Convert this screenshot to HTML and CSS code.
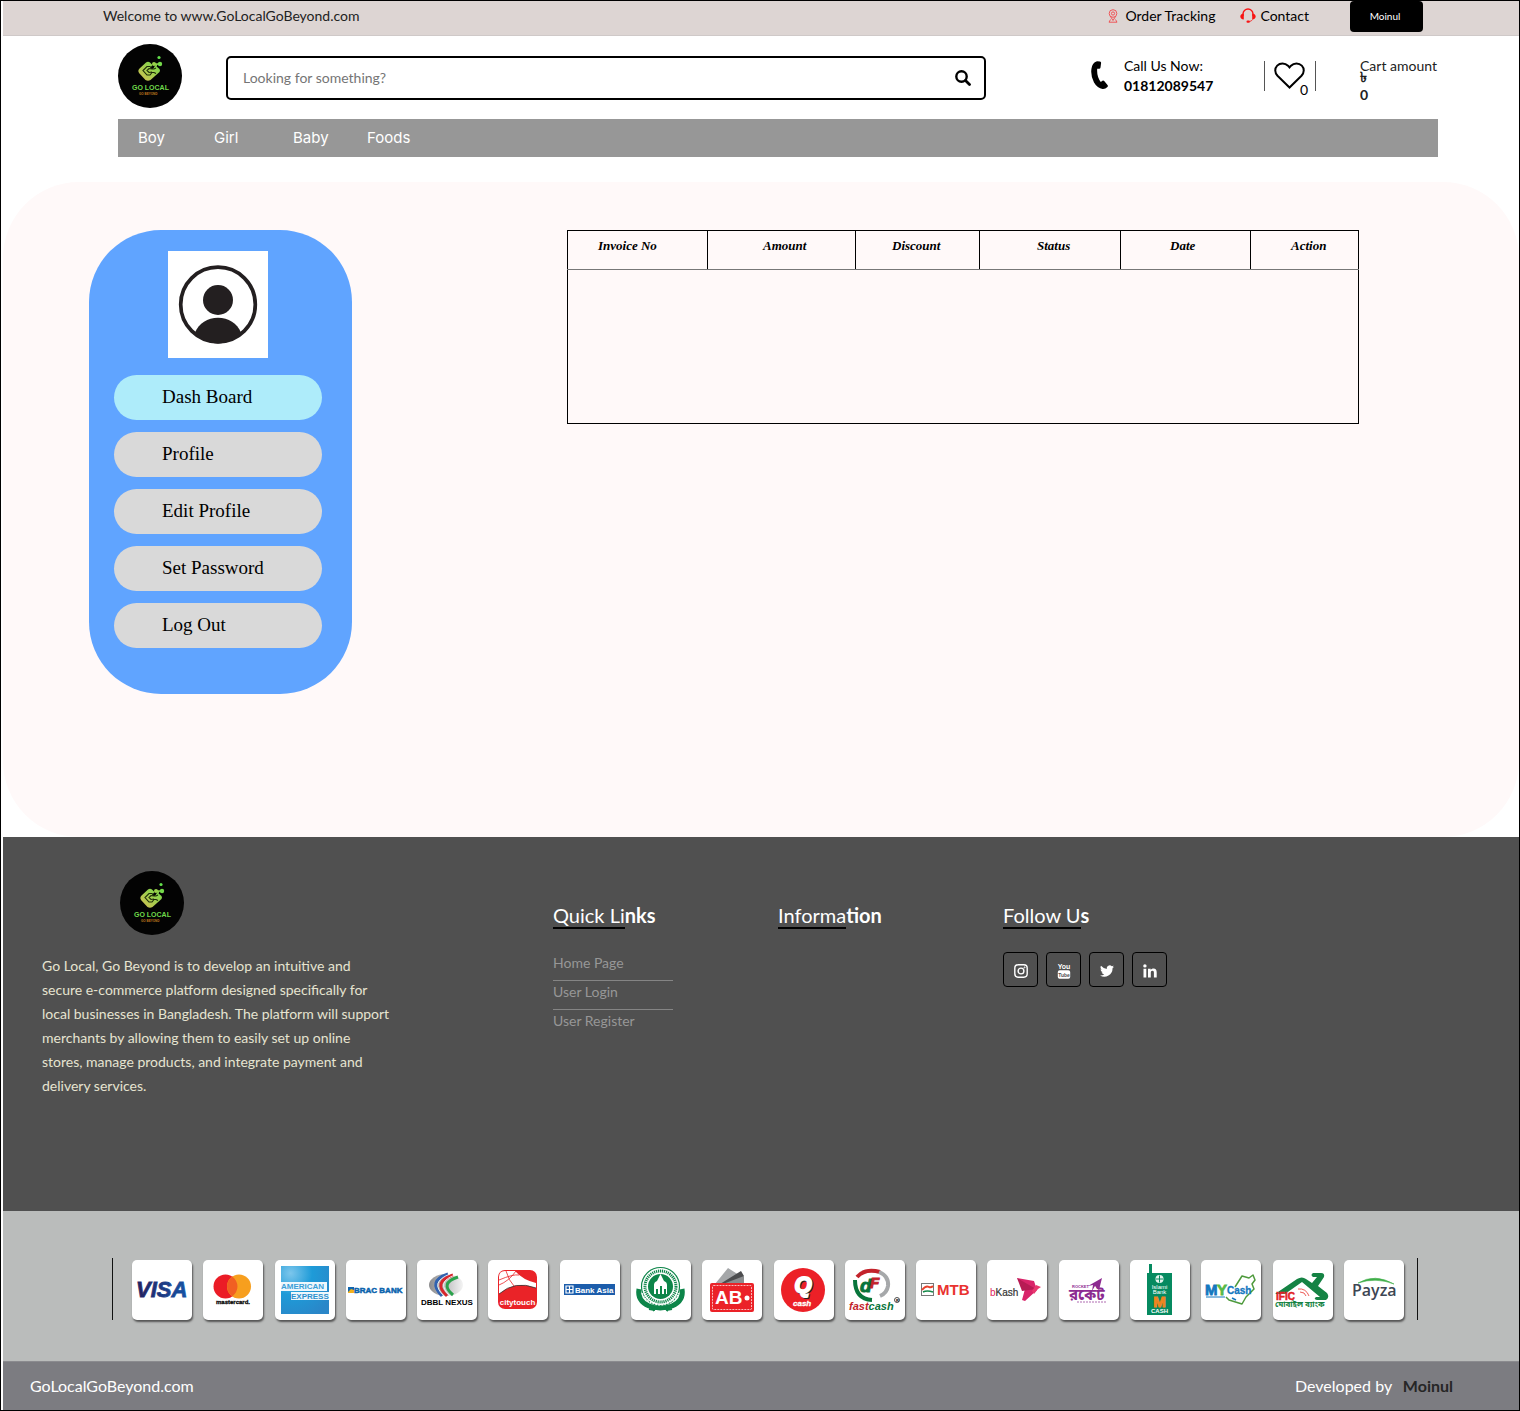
FILE: index.html
```html
<!DOCTYPE html>
<html lang="en">
<head>
<meta charset="utf-8">
<meta name="viewport" content="width=device-width, initial-scale=1">
<title>Go Local Go Beyond - Dash Board</title>
<link rel="stylesheet" href="styles.css">
</head>
<body>
<svg class="defs" width="0" height="0" aria-hidden="true">
  <defs>
    <linearGradient id="lime" x1="0" y1="1" x2="1" y2="0"><stop offset="0" stop-color="#d8bd52"/><stop offset="1" stop-color="#6fdc4a"/></linearGradient>
    <linearGradient id="visa" x1="0" x2="1"><stop offset="0" stop-color="#23205f"/><stop offset="1" stop-color="#1654a6"/></linearGradient>
    <radialGradient id="amex" cx=".2" cy=".15" r="1"><stop offset="0" stop-color="#7cc6ec"/><stop offset=".45" stop-color="#1e9bd8"/><stop offset="1" stop-color="#2a86c8"/></radialGradient>
    <linearGradient id="steel" x1="0" x2="1"><stop offset="0" stop-color="#8b8b8d"/><stop offset="1" stop-color="#f4f4f4"/></linearGradient>
    <symbol id="logo" viewBox="0 0 64 64">
      <circle cx="32" cy="32" r="32" fill="#030303"/>
      <path d="M28 18.500q2-1.500 4 0l2.500 2.500-2 2.500 2 1.500 2-1 1.500-2 3.500 3q1 1.500 0 3l-9 8q-2.500 1.500-5 0l-6.500-7q-1.500-2 0-4z" fill="url(#lime)"/>
      <path d="M36 20h6M36 25l3-5" stroke="#8bd44a" stroke-width="1.500"/>
      <circle cx="36" cy="20" r="2" fill="#9ad24a"/><circle cx="42" cy="20" r="2.200" fill="#74d94a"/><circle cx="41" cy="13.500" r="1.600" fill="#63e04c"/>
      <path d="M38 24l-2 1h-2l-2-2.500h-3l-4 4 4 4.500h3l2-2.500h2l2 1M34 25l-3-.5-2 2 2 2 3-.5" fill="none" stroke="#1c2a08" stroke-width="1.100"/>
      <text x="14" y="46" class="logo-name">GO LOCAL</text>
      <text x="21" y="51" class="logo-sub">GO BEYOND</text>
    </symbol>
  </defs>
</svg>

<div class="page">
  <div class="topbar">
    <p class="welcome">Welcome to www.GoLocalGoBeyond.com</p>
    <a class="top-link" href="#tracking">
      <svg width="10" height="14" viewBox="0 0 10 14" fill="none" stroke="#f0474b"><circle cx="5" cy="4.500" r="3.800" stroke-width=".9"/><circle cx="5" cy="4.500" r="1.600" stroke-width=".9"/><path d="M2.500 7.500 5 11.500 7.500 7.500M2.500 10.500 1 13.200h8l-1.500-2.700" stroke-width=".9"/></svg>
      Order Tracking
    </a>
    <a class="top-link contact" href="#contact">
      <svg width="16" height="17" viewBox="0 0 16 17"><path d="M3 8V6a5 5 0 0 1 10 0v2" fill="none" stroke="#f81414" stroke-width="1.300"/><path d="M3.800 5.500v6C1.500 11.500.3 10 .3 8.500s1.200-3 3.500-3zM12.200 5.500v6c2.300 0 3.500-1.500 3.500-3s-1.200-3-3.500-3z" fill="#f81414"/><path d="M12.500 11.500q-.8 1.700-3 2" fill="none" stroke="#f81414" stroke-width=".8"/><rect x="6.500" y="12.500" width="3.400" height="2.200" rx="1" fill="#f81414"/></svg>
      Contact
    </a>
    <button class="user-btn" type="button">Moinul</button>
  </div>

  <header class="header">
    <div class="brand-row">
      <a class="logo-link" href="#home" aria-label="Go Local home"><svg class="logo" width="64" height="64"><use href="#logo"/></svg></a>
      <form class="search" role="search">
        <input type="search" aria-label="Search products" placeholder="Looking for something?">
        <button type="submit" aria-label="Search"><svg width="16" height="16" viewBox="0 0 16 16" fill="none" stroke="#000"><circle cx="6.500" cy="6.500" r="5.200" stroke-width="2.400"/><path d="m10.500 10.500 4 4" stroke-width="2.800" stroke-linecap="round"/></svg></button>
      </form>
      <div class="call">
        <svg width="17" height="28" viewBox="0 0 17 28"><path d="M6 .3 9 .5q1.200.2 1.100 1.500L9.500 6.500q-.2 1.300-1.400 1.300H6.200Q5.600 15.500 9.800 21l1.600-1.200q1-.7 1.800.2l3.300 4q.8 1-.1 1.900-2 2.200-4.800 2Q6.500 27.500 3 21.500-.5 15 .4 8 1 2 6 .3z"/></svg>
        <p>Call Us Now:<br><strong>01812089547</strong></p>
      </div>
      <a class="wish" href="#wishlist" aria-label="Wish list, 0 items">
        <svg width="31" height="27" viewBox="0 0 31 27"><path d="M15.500 25.500 3.500 13.800C.6 10.800.5 6.300 3.200 3.600 6 .7 11 .6 14 3.700L15.500 5.400 17 3.700C20 .6 25 .7 27.800 3.600c2.700 2.700 2.600 7.200-.3 10.200z" fill="none" stroke="#000" stroke-width="2"/></svg>
        <span class="wish-count">0</span>
      </a>
      <div class="cart"><span>Cart amount</span><b>৳<br>0</b></div>
    </div>
    <nav class="nav" aria-label="Categories">
      <a href="#boy">Boy</a><a href="#girl">Girl</a><a href="#baby">Baby</a><a href="#foods">Foods</a>
    </nav>
  </header>

  <main class="main">
    <aside class="side">
      <svg class="avatar" width="100" height="107" viewBox="0 0 100 107" role="img" aria-label="User"><path fill="#fff" d="M0 0h100v107H0z"/><circle cx="50" cy="53.500" r="37.300" fill="none" stroke="#231f20" stroke-width="3.700"/><circle cx="50" cy="49" r="15" fill="#231f20"/><path d="M27 81.500C31 72.500 39.500 66.800 50 66.800S69 72.500 73 81.500C66 89 58 92.500 50 92.500S34 89 27 81.500z" fill="#231f20"/></svg>
      <nav class="menu" aria-label="Account">
        <a class="active" href="#dashboard">Dash Board</a>
        <a href="#profile">Profile</a>
        <a href="#edit">Edit Profile</a>
        <a href="#password">Set Password</a>
        <a href="#logout">Log Out</a>
      </nav>
    </aside>
    <table class="invoices">
      <thead><tr><th class="c-invoice">Invoice No</th><th class="c-amount">Amount</th><th class="c-discount">Discount</th><th class="c-status">Status</th><th class="c-date">Date</th><th class="c-action">Action</th></tr></thead>
      <tbody><tr><td colspan="6"></td></tr></tbody>
    </table>
  </main>

  <footer>
    <div class="foot">
      <div class="about">
        <svg class="logo" width="64" height="64"><use href="#logo"/></svg>
        <p>Go Local, Go Beyond is to develop an intuitive and secure e-commerce platform designed specifically for local businesses in Bangladesh. The platform will support merchants by allowing them to easily set up online stores, manage products, and integrate payment and delivery services.</p>
      </div>
      <section class="col">
        <h2><span>Quick Li</span>nks</h2>
        <ul class="links"><li><a href="#home">Home Page</a></li><li><a href="#login">User Login</a></li><li><a href="#register">User Register</a></li></ul>
      </section>
      <section class="col"><h2><span>Informa</span>tion</h2></section>
      <section class="col">
        <h2><span>Follow U</span>s</h2>
        <div class="social">
          <a href="#instagram" aria-label="Instagram"><svg width="14" height="14" viewBox="0 0 14 14" fill="none" stroke="#fff"><rect x=".8" y=".8" width="12.400" height="12.400" rx="3.400" stroke-width="1.400"/><circle cx="7" cy="7" r="2.900" stroke-width="1.400"/><circle cx="10.600" cy="3.400" r=".5"/></svg></a>
          <a href="#youtube" aria-label="YouTube"><svg width="14" height="16" viewBox="0 0 14 16"><rect x=".8" y="7.300" width="12.400" height="8.400" rx="1.800" fill="#fff"/><text x="7" y="6" text-anchor="middle" class="yt-you">You</text><text x="7" y="14" text-anchor="middle" class="yt-tube">Tube</text></svg></a>
          <a href="#twitter" aria-label="Twitter"><svg width="14" height="14" viewBox="0 0 24 24"><path fill="#fff" d="M24 4.600a10 10 0 0 1-2.800.8 5 5 0 0 0 2.100-2.700 10 10 0 0 1-3.100 1.200 4.900 4.900 0 0 0-8.400 4.500A14 14 0 0 1 1.700 3.200a4.900 4.900 0 0 0 1.500 6.500 5 5 0 0 1-2.200-.6 4.900 4.900 0 0 0 3.900 4.900 5 5 0 0 1-2.200.1 4.900 4.900 0 0 0 4.600 3.400A10 10 0 0 1 0 19.500 14 14 0 0 0 21.500 7.100 10 10 0 0 0 24 4.600z"/></svg></a>
          <a href="#linkedin" aria-label="LinkedIn"><svg width="14" height="14" viewBox="0 0 14 14" fill="#fff"><circle cx="1.900" cy="1.900" r="1.700"/><path d="M.5 4.700h2.800V13.500H.5zM5 4.700h2.700v1.200c.6-1 1.600-1.500 2.700-1.500 2.400 0 3.300 1.500 3.300 4v5.100h-2.800V9c0-1.300-.3-2.200-1.500-2.200S7.800 7.700 7.800 9v4.500H5z"/></svg></a>
        </div>
      </section>
    </div>

    <div class="pay-band">
      <div class="pay">
        <svg class="card" viewBox="0 0 60 60"><text x="4" y="37" fill="url(#visa)" stroke="url(#visa)" stroke-width=".8" class="b i t22">VISA</text></svg>
        <svg class="card" viewBox="0 0 60 60"><circle cx="22.500" cy="26.500" r="12" fill="#eb1c26"/><circle cx="36" cy="26.500" r="12" fill="#f79f1e"/><path d="M29.250 16.600a12 12 0 0 1 0 19.800 12 12 0 0 1 0-19.800z" fill="#f16022"/><text x="30" y="44" text-anchor="middle" class="b t6" stroke="#111" stroke-width=".3">mastercard.</text></svg>
        <svg class="card" viewBox="0 0 60 60"><path d="M6 6h48v48H6z" fill="url(#amex)"/><path d="M6 22h46v9H6zM16 32h38v8H16z" fill="#eef7fc"/><text x="6" y="29" class="b t8" fill="#3b9fd8">AMERICAN</text><text x="16" y="39" class="b t8" fill="#2b90ce">EXPRESS</text></svg>
        <svg class="card" viewBox="0 0 60 60"><path d="M2 27h6v6H2z" fill="#f4b21b"/><path d="M2 27h6v3L5 29l-3 3z" fill="#0f66ae"/><text x="8" y="33" class="b t8" fill="#0a63ad" stroke="#0a63ad" stroke-width=".5">BRAC BANK</text></svg>
        <svg class="card" viewBox="0 0 60 60"><ellipse cx="29" cy="25" rx="17" ry="11" fill="url(#steel)"/><g fill="none" stroke-width="3"><path d="M31 14Q10 21 25 36" stroke="#3162b0"/><path d="M36 15Q15 22 30 36" stroke="#d8262d"/><path d="M41 17Q22 23 36 35" stroke="#2ba24c"/></g><g fill="none" stroke="#fff" stroke-width=".8"><path d="M33 14Q12 22 27 36M38 15Q18 22 33 36"/></g><text x="4" y="45" class="b t8">DBBL NEXUS</text></svg>
        <svg class="card" viewBox="0 0 60 60"><rect x="10" y="10" width="39" height="39" rx="7" fill="#ea2328"/><path d="M11 34V17q0-6 6-6h10q8 9 21 12v5Q27 20 11 34z" fill="#fff"/><path d="M11 25Q21 21 28 11M18 11q3 10 8 15M11 20q14-6 20-5" fill="none" stroke="#ea2328" stroke-width=".8"/><path d="M11 34Q27 20 48 28" fill="none" stroke="#333" stroke-width=".8"/><text x="29.500" y="45" text-anchor="middle" class="b t8" fill="#fff">citytouch</text></svg>
        <svg class="card" viewBox="0 0 60 60"><path d="M4 24h51v11H4z" fill="#1c5dab"/><path d="M6 26h7v7H6zM9.500 26v7M6 29.500h7" fill="none" stroke="#fff" stroke-width="1.200"/><text x="15" y="33" class="b t8" fill="#fff">Bank Asia</text></svg>
        <svg class="card" viewBox="0 0 60 60"><g fill="none" stroke="#0d8549"><path d="M8 29q-2 12 10 17 11 4 23 0 12-5 10-17" stroke-width="5"/><circle cx="29.500" cy="26.500" r="19" fill="#fff" stroke-width="1.200"/><circle cx="29.500" cy="26.500" r="15.500" stroke-width="3" stroke-dasharray="1.200 .8"/><path d="M22 51q7-9 15 0M18 49l6 1M41 49l-6 1" stroke-width="2"/></g><circle cx="29.500" cy="26.500" r="12.500" fill="#0d8549"/><path d="M23 34V25q0-3 3-4l3.500-7 3.500 7q3 1 3 4v9z" fill="#fff"/><path d="M25 34v-5h2v5zM29 34v-8h2v8zM33 34v-5h2v5z" fill="#0d8549"/><path d="M11 33q5 11 18 12 13-1 19-12" fill="none" stroke="#fff" stroke-width="1.200" stroke-dasharray="2 1"/></svg>
        <svg class="card" viewBox="0 0 60 60"><path d="M13 24 26 8l11 7-5 9z" fill="#a5a7a9"/><path d="M18 24 39 11l3 5-5 8z" fill="#4c4d4f"/><path d="M21 24 42 16v8z" fill="#8b8d8f"/><rect x="8" y="23" width="44" height="29" rx="2" fill="#eb2228"/><rect x="10.500" y="25.500" width="39" height="24" rx="1" fill="none" stroke="#fff" stroke-width=".7" stroke-dasharray="2 1"/><text x="13" y="44" class="b t19" fill="#fff">AB</text><circle cx="45" cy="38" r="2.500" fill="#fff"/></svg>
        <svg class="card" viewBox="0 0 60 60"><circle cx="29" cy="30" r="22" fill="#ec2027"/><g text-anchor="middle" class="b i t22" stroke-width="2"><text x="30" y="33" fill="#222" stroke="#222">Q</text><text x="29" y="32" fill="#fff" stroke="#fff">Q</text></g><text x="19" y="46" class="b i t8" fill="#fff" stroke="#fff" stroke-width=".3">cash</text></svg>
        <svg class="card" viewBox="0 0 60 60"><g fill="none" stroke-width="4"><path d="M12 17Q20 8 35 12" stroke="#c3232b"/><path d="M10 20q0 19 17 20" stroke="#08753b"/><path d="M34 12q10 4 9 14-1 7-8 10" stroke="#a6a8aa"/></g><text x="15" y="32" class="b i t19" fill="#08753b" stroke="#08753b">d</text><text x="25" y="28" class="b i t15" fill="#c3232b" stroke="#c3232b">F</text><circle cx="52" cy="40" r="2.500" fill="none" stroke="#222" stroke-width=".8"/><text x="51" y="41.500" class="b t4">R</text><text x="4" y="50" class="b i t11" fill="#c3232b">fast<tspan fill="#08753b">cash</tspan></text></svg>
        <svg class="card" viewBox="0 0 60 60"><rect x="5.500" y="23.500" width="12" height="12" fill="#fff" stroke="#777"/><path d="M6 30q4-5 7-3 2 1 4-1" fill="none" stroke="#e8432e" stroke-width="2"/><path d="M7 32q4-2 10 0" fill="none" stroke="#168a4b" stroke-width="1.500"/><text x="21" y="35" class="b t15" fill="#e9322f">MTB</text></svg>
        <svg class="card" viewBox="0 0 60 60"><text x="3" y="36" class="t10" fill="#333" stroke="#333" stroke-width=".2"><tspan fill="#e0245e" stroke="none">b</tspan>Kash</text><path d="M30 18 47 21 50 30 38 41 35 40 38 29z" fill="#d9246a"/><path d="M30 18 49 29 35 31z" fill="#b71b54"/><path d="M45 31 49 25 54 27 51 29 47 34z" fill="#e8376f"/></svg>
        <svg class="card" viewBox="0 0 60 60"><path d="M29 26 43 18 40 30 36 26 33 31 34 25z" fill="#8d2b91"/><text x="13" y="28" class="b t4" fill="#8d2b91">ROCKET</text><text x="10" y="40" class="b bn t15" fill="#8d2b91">রকেট</text><path d="M18 42h30" stroke="#8d2b91" stroke-width=".7" stroke-dasharray="2 1"/></svg>
        <svg class="card" viewBox="0 0 60 60"><path d="M17 13h2V4h3v9h20v42H17z" fill="#068a60"/><circle cx="29.500" cy="19" r="4" fill="#e3f3ed"/><path d="M29.500 15.500v7M26 19h7" stroke="#068a60"/><g text-anchor="middle" fill="#fff"><text x="29.500" y="29" class="t6">Islami</text><text x="29.500" y="34" class="t6">Bank</text><text x="29.500" y="47" class="b t15" fill="#f0851f" stroke="#f0851f">M</text><text x="29.500" y="53" class="b t6">CASH</text></g></svg>
        <svg class="card" viewBox="0 0 60 60"><path d="M34 27 41 16 48 18 52 15 54 20 51 24 53 29 45 37 41 44 28 40 25 37" fill="none" stroke="#4e9a3c" stroke-width="1.500" stroke-linejoin="round"/><path d="M31 38l4 2" stroke="#1478bf" stroke-width="1.500"/><g stroke-width=".8"><text x="4" y="35" class="b t15" fill="#1478bf" stroke="#1478bf">M</text><text x="16" y="35" class="b t15" fill="#58b947" stroke="#58b947">Y</text></g><text x="26" y="34" class="b t10" fill="#1478bf" stroke="#1478bf" stroke-width=".3">Cash</text><path d="M5 37h19" stroke="#1478bf"/></svg>
        <svg class="card" viewBox="0 0 60 60"><path d="M2 34 24 19q5-3 9 0l6 4 5-6-4 0q-3-2 0-4h8q4 0 3 4l-6 9 9 7q3 4-1 7H44q-4-1-1-3h4L29 22 12 34z" fill="#158344"/><path d="M25 29q8-1 11 7M27 32q5 0 6 4" fill="none" stroke="#e8332e" stroke-width=".8"/><text x="3" y="40" class="b t10" fill="#e21f26" stroke="#e21f26" stroke-width=".5">IFIC</text><text x="2" y="47" class="b bn t8" fill="#158344">মোবাইল ব্যাংক</text></svg>
        <svg class="card" viewBox="0 0 60 60"><path d="M14 23Q31 13 50 24 32 17 14 23z" fill="#3fae49" stroke="#3fae49" stroke-width=".6"/><text x="8" y="36" class="payza">Payza</text></svg>
      </div>
    </div>

    <div class="bottom"><span>GoLocalGoBeyond.com</span><span>Developed by <strong>Moinul</strong></span></div>
  </footer>
</div>
</body>
</html>
```
FILE: styles.css
```css
* { box-sizing: border-box; }

body {
  margin: 0;
  background: #fff;
  color: #000;
  font: 14px/20px Lato, "Liberation Sans", sans-serif;
}

p, h2, ul { margin: 0; padding: 0; }
a { color: inherit; text-decoration: none; }
svg { display: block; flex: none; }
.defs { position: absolute; }

.page {
  border: 1px solid #000;
  padding-left: 2px;
}

/* Top strip */
.topbar {
  display: flex;
  align-items: flex-start;
  height: 35px;
  padding: 0 96px 0 100px;
  background: #ddd5d3;
  border-bottom: 1px solid #cfc9c8;
}
.welcome { flex: 1; padding-top: 5px; color: #222; }
.top-link { display: flex; align-items: center; gap: 7px; padding-top: 5px; }
.contact { gap: 4px; margin: 0 41px 0 25px; }
.user-btn {
  width: 73px;
  height: 31px;
  padding: 0 3px 1px 0;
  border: 0;
  border-radius: 4px;
  background: #000;
  color: #fff;
  font: 10px Lato, sans-serif;
}

/* Header */
.header { padding: 0 81px 0 115px; }
.brand-row {
  display: flex;
  align-items: flex-start;
  padding: 8px 0 11px;
}
.search {
  display: flex;
  flex: 1;
  height: 44px;
  margin: 12px 105px 0 44px;
  border: 2px solid #000;
  border-radius: 5px;
}
.search input {
  flex: 1;
  min-width: 0;
  padding: 0 15px;
  border: 0;
  background: none;
  font: inherit;
}
.search input::placeholder { color: #757575; opacity: 1; }
.search button {
  padding: 0 13px;
  border: 0;
  background: none;
}
.call { display: flex; gap: 16px; width: 173px; padding-top: 12px; }
.call svg { margin-top: 5px; }
.wish {
  position: relative;
  width: 52px;
  height: 30px;
  margin: 17px 44px 0 0;
  padding: 1px 9px;
  border: solid #555;
  border-width: 0 1px;
}
.wish-count { position: absolute; top: 19px; right: 7px; }
.cart {
  width: 78px;
  padding-top: 12px;
  color: #222;
  white-space: nowrap;
}
.cart span, .cart b { display: block; }
.cart b { margin-top: -8px; line-height: 18px; }

.nav {
  display: grid;
  grid-template-columns: 76px 79px 74px 1fr;
  align-items: center;
  height: 38px;
  padding: 0 0 2px 20px;
  background: #979797;
  color: #fff;
  font: 15px Inter, sans-serif;
}

/* Account area */
.main {
  display: flex;
  align-items: flex-start;
  gap: 215px;
  margin-top: 25px;
  padding: 48px 160px 143px 86px;
  border-radius: 76px;
  background: #fff9f9;
}
.side {
  flex: none;
  width: 263px;
  padding: 21px 30px 46px 25px;
  border-radius: 72px;
  background: #60a4ff;
}
.avatar { margin: 0 auto 17px; }
.menu { display: grid; gap: 12px; }
.menu a {
  height: 45px;
  padding-left: 48px;
  border-radius: 23px;
  background: #d9d9d9;
  font: 19px/43px "Liberation Serif", serif;
}
.menu .active { background: #aeecfa; }

.invoices {
  flex: 1;
  table-layout: fixed;
  border-collapse: collapse;
  border: 1px solid #000;
}
.invoices th {
  height: 39px;
  padding: 0 0 8px;
  border: 1px solid #000;
  border-bottom-color: #777;
  font: italic bold 13px "Liberation Serif", serif;
  text-align: left;
}
.invoices td { height: 154px; padding: 0; }
.invoices .c-invoice { width: 140px; padding-left: 30px; }
.invoices .c-amount { width: 148px; padding-left: 55px; }
.invoices .c-discount { width: 124px; padding-left: 36px; }
.invoices .c-status { width: 141px; padding-left: 57px; }
.invoices .c-date { width: 130px; padding-left: 49px; }
.invoices .c-action { padding-left: 40px; }

/* Footer */
.foot {
  display: flex;
  align-items: flex-start;
  padding: 34px 39px 113px;
  background: #505050;
}
.about { width: 352px; margin-right: 159px; }
.about .logo { margin: 0 0 19px 78px; }
.about p { color: #e6e4d0; line-height: 24px; }
.col { width: 225px; padding-top: 32px; }
.col h2 {
  display: flex;
  margin-bottom: 23px;
  color: #fff;
  font-size: 20px;
  line-height: 24px;
}
.col h2 span { border-bottom: 2px solid #000; font-weight: 400; }
.links { width: 120px; color: #979797; list-style: none; }
.links li { height: 29px; padding-top: 1px; }
.links li + li { border-top: 1px solid #858585; }
.links li:first-child { height: 28px; }
.social { display: flex; gap: 8px; }
.social a {
  display: grid;
  place-items: center;
  width: 35px;
  height: 35px;
  padding-top: 3px;
  border: 1px solid #000;
  border-radius: 4px;
}

.pay-band { padding: 47px 101px 41px 109px; background: #babcbb; }
.pay {
  display: flex;
  justify-content: space-between;
  height: 62px;
  padding: 2px 13px 0 19px;
  border: solid #111;
  border-width: 0 1px;
}
.card {
  width: 60px;
  height: 60px;
  border-radius: 5px;
  background: #fff;
  box-shadow: 1px 2px 2px #555;
}

.bottom {
  display: flex;
  justify-content: space-between;
  padding: 14px 66px 14px 27px;
  border-top: 1px solid #8b8b8f;
  background: #7c7c81;
  color: #fff;
  font-size: 16px;
}
.bottom strong { margin-left: 7px; color: #262626; }

/* Lettering inside logos */
svg text { font-family: "Liberation Sans", sans-serif; }
.b { font-weight: bold; }
.i { font-style: italic; }
svg .bn { font-family: "Noto Sans Bengali", "Noto Sans", sans-serif; }
.t4 { font-size: 4px; }
.t6 { font-size: 6px; }
.t8 { font-size: 8px; }
.t10 { font-size: 10px; }
.t11 { font-size: 11px; }
.t15 { font-size: 15px; }
.t19 { font-size: 19px; }
.t22 { font-size: 22px; }
svg .payza { font: 600 16px "Open Sans", sans-serif; fill: #3d4653; }
.logo-name { font-size: 7px; font-weight: bold; fill: #6fd84a; }
.logo-sub { font-size: 3px; font-weight: bold; fill: #c07a1e; }
.yt-you { font-size: 7px; font-weight: bold; fill: #fff; }
.yt-tube { font-size: 5px; font-weight: bold; fill: #505050; }
```
